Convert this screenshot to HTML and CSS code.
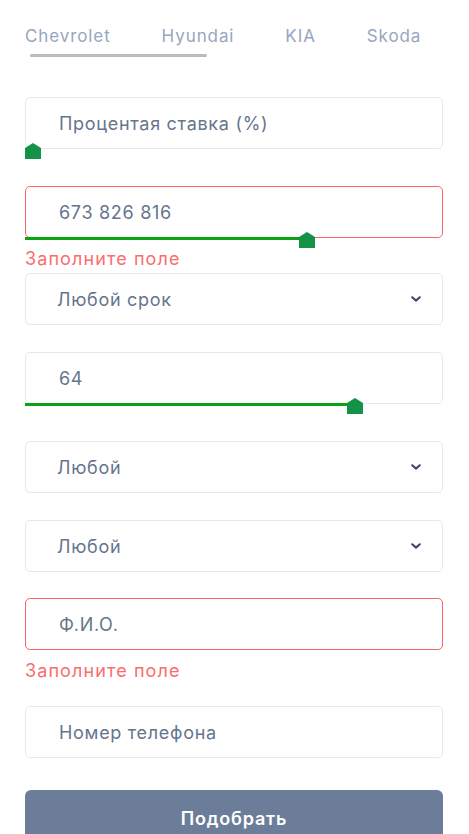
FILE: index.html
```html
<!DOCTYPE html>
<html lang="ru">
<head>
    <meta charset="UTF-8">
    <title>Подбор кредита</title>
    <link rel="stylesheet" href="styles.css">
</head>
<body>
<div id="wrap">
    <ul class="tabs">
        <li class="on">Chevrolet</li>
        <li>Hyundai</li>
        <li>KIA</li>
        <li>Skoda</li>
    </ul>
    <div class="tabs_line"></div>

    <form class="calc">
        <div class="field field_range">
            <div class="control">
                <div class="box placeholder">Процентая ставка (%)</div>
                <div class="range">
                    <span class="range_fill" style="width: 0px"></span>
                    <span class="range_thumb" style="left: 0px"></span>
                </div>
            </div>
        </div>

        <div class="field field_err field_tight">
            <div class="control">
                <div class="box">673 826 816</div>
                <div class="range">
                    <span class="range_fill" style="width: 274px"></span>
                    <span class="range_thumb" style="left: 274px"></span>
                </div>
            </div>
            <p class="err">Заполните поле</p>
        </div>

        <div class="field">
            <div class="box select">
                <span>Любой срок</span>
                <svg class="arrow" width="10" height="6" viewBox="0 0 10 6"><path d="M1.2 1.2 5 4.6 8.8 1.2" fill="none" stroke="#3f416b" stroke-width="2" stroke-linecap="round"/></svg>
            </div>
        </div>

        <div class="field field_range">
            <div class="control">
                <div class="box">64</div>
                <div class="range">
                    <span class="range_fill" style="width: 322px"></span>
                    <span class="range_thumb" style="left: 322px"></span>
                </div>
            </div>
        </div>

        <div class="field">
            <div class="box select">
                <span>Любой</span>
                <svg class="arrow" width="10" height="6" viewBox="0 0 10 6"><path d="M1.2 1.2 5 4.6 8.8 1.2" fill="none" stroke="#3f416b" stroke-width="2" stroke-linecap="round"/></svg>
            </div>
        </div>

        <div class="field field_sel">
            <div class="box select">
                <span>Любой</span>
                <svg class="arrow" width="10" height="6" viewBox="0 0 10 6"><path d="M1.2 1.2 5 4.6 8.8 1.2" fill="none" stroke="#3f416b" stroke-width="2" stroke-linecap="round"/></svg>
            </div>
        </div>

        <div class="field field_err">
            <div class="box placeholder">Ф.И.О.</div>
            <p class="err">Заполните поле</p>
        </div>

        <div class="field field_last">
            <div class="box placeholder">Номер телефона</div>
        </div>

        <button type="button" class="submit">Подобрать</button>
    </form>
</div>
</body>
</html>
```

FILE: styles.css
```css
body, div, ul, li, p, form, button {
    margin: 0;
    padding: 0;
}

ul, li {
    list-style-type: none;
}

body {
    background-color: #fff;
    font-family: Inter, "Open Sans", sans-serif;
    overflow: hidden;
}

#wrap {
    width: 418px;
    padding: 24px 26px 0 25px;
}

.tabs {
    display: flex;
    gap: 51px;
    height: 24px;
    line-height: 24px;
    font-size: 17px;
    letter-spacing: 0.9px;
    color: #97a6bf;
    white-space: nowrap;
}

.tabs li {
    cursor: pointer;
}

.tabs_line {
    width: 177px;
    height: 3px;
    margin: 6px 0 0 5px;
    background-color: #bcbcbc;
    border-radius: 2px;
}

.calc {
    margin-top: 40px;
}

.field {
    margin-bottom: 27px;
}

.field_range {
    margin-bottom: 37px;
}

.field_sel {
    margin-bottom: 26px;
}

.field_err {
    margin-bottom: 24px;
}

.field_err.field_tight {
    margin-bottom: 3px;
}

.field_last {
    margin-bottom: 32px;
}

.control {
    position: relative;
}

.box {
    display: flex;
    align-items: center;
    height: 52px;
    box-sizing: border-box;
    padding: 0 30px 0 33px;
    border: 1px solid #e6e9ef;
    border-radius: 5px;
    background-color: #fff;
    font-size: 18px;
    letter-spacing: 0.7px;
    color: #66758d;
}

.field_err .box {
    border-color: #ff6262;
}

.select {
    justify-content: space-between;
    padding-left: 31px;
    padding-right: 21px;
}

.range {
    position: absolute;
    left: 0;
    right: 0;
    bottom: -2px;
    height: 3px;
}

.range_fill {
    position: absolute;
    left: 0;
    top: 0;
    height: 3px;
    background-color: #0ba313;
}

.range_thumb {
    position: absolute;
    top: -5px;
    width: 16px;
    height: 16px;
    background-color: #149248;
    clip-path: polygon(50% 0, 100% 32%, 100% 100%, 0 100%, 0 32%);
}

.err {
    margin-top: 10px;
    height: 22px;
    line-height: 22px;
    font-size: 18px;
    letter-spacing: 1.1px;
    color: #fa6e6e;
}

.submit {
    display: block;
    width: 100%;
    height: 56px;
    border: 0;
    border-radius: 6px;
    background-color: #6b7d99;
    font-family: inherit;
    font-size: 18px;
    font-weight: 600;
    letter-spacing: 0.8px;
    color: #fff;
    cursor: pointer;
}
```
